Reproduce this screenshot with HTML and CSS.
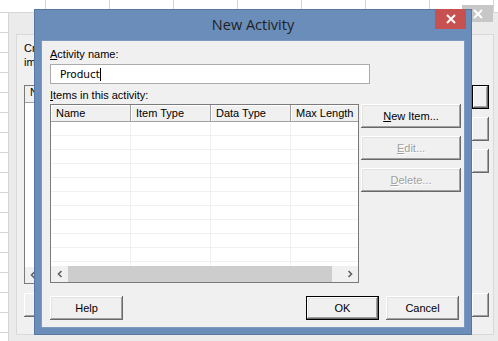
FILE: index.html
```html
<!DOCTYPE html>
<html lang="en">
<head>
    <meta charset="UTF-8">
    <meta name="viewport" content="width=device-width, initial-scale=1.0">
    <title>New Activity</title>
    <link rel="stylesheet" href="styles.css">
</head>
<body>
    <div class="desktop">
        <!-- window behind the dialog -->
        <div class="back-window">
            <div class="back-close">
                <svg width="10" height="10" viewBox="0 0 10 10"><path d="M1 1L9 9M9 1L1 9" stroke="#fff" stroke-width="2"/></svg>
            </div>
            <div class="back-client">
                <p class="back-text">Cr<br>im</p>
                <div class="back-main">
                    <div class="back-list">
                        <div class="back-head">N</div>
                        <div class="back-body"></div>
                        <div class="back-scroll">
                            <svg width="8" height="8" viewBox="0 0 8 8"><path d="M5.5 1L2.5 4L5.5 7" fill="none" stroke="#606060" stroke-width="1.6"/></svg>
                        </div>
                    </div>
                    <div class="back-buttons">
                        <div class="back-btn default"></div>
                        <div class="back-btn"></div>
                        <div class="back-btn"></div>
                    </div>
                </div>
                <div class="back-footer">
                    <div class="back-btn wide"></div>
                    <div class="back-btn"></div>
                </div>
            </div>
        </div>

        <!-- New Activity dialog -->
        <div class="dialog">
            <div class="titlebar">
                <span class="title">New Activity</span>
                <button class="close-button">
                    <svg width="10" height="10" viewBox="0 0 10 10"><path d="M1 1L9 9M9 1L1 9" stroke="#fff" stroke-width="2"/></svg>
                </button>
            </div>
            <div class="client">
                <label class="field-label" for="activityName"><u>A</u>ctivity name:</label>
                <div class="text-input" id="activityName">Product<span class="caret"></span></div>
                <div class="field-label items-label"><u>I</u>tems in this activity:</div>

                <div class="items-row">
                    <div class="list-view">
                        <div class="list-header">
                            <div class="col">Name</div>
                            <div class="col">Item Type</div>
                            <div class="col">Data Type</div>
                            <div class="col last">Max Length</div>
                        </div>
                        <div class="list-body"></div>
                        <div class="h-scroll">
                            <div class="arrow">
                                <svg width="8" height="8" viewBox="0 0 8 8"><path d="M5.5 1L2.5 4L5.5 7" fill="none" stroke="#606060" stroke-width="1.6"/></svg>
                            </div>
                            <div class="thumb"></div>
                            <div class="arrow right">
                                <svg width="8" height="8" viewBox="0 0 8 8"><path d="M2.5 1L5.5 4L2.5 7" fill="none" stroke="#606060" stroke-width="1.6"/></svg>
                            </div>
                        </div>
                    </div>
                    <div class="side-buttons">
                        <button class="win-button"><u>N</u>ew Item...</button>
                        <button class="win-button" disabled><u>E</u>dit...</button>
                        <button class="win-button" disabled><u>D</u>elete...</button>
                    </div>
                </div>

                <div class="footer">
                    <button class="win-button small">Help</button>
                    <button class="win-button small default push">OK</button>
                    <button class="win-button small">Cancel</button>
                </div>
            </div>
        </div>
    </div>
</body>
</html>
```

FILE: styles.css
```css
* {
    box-sizing: border-box;
}
body {
    margin: 0;
    font-family: "Liberation Sans", Arial, sans-serif;
    font-size: 11px;
    color: #000;
    background-color: #fff;
    /* spreadsheet grid behind the windows */
    background-image:
        repeating-linear-gradient(to bottom, transparent 0 12px, #d4d4d4 12px 13px, transparent 13px 20px),
        repeating-linear-gradient(to right, transparent 0 45px, #d4d4d4 45px 46px, transparent 46px 64px);
    background-size: 100% 20px, 64px 100%;
    background-position: 0 0, 0 0;
}
.desktop {
    position: relative;
    width: 498px;
    height: 341px;
    overflow: hidden;
}

/* ---------- back window ---------- */
.back-window {
    position: absolute;
    left: 8px;
    top: 12px;
    width: 492px;
    height: 335px;
    background-color: #ebebeb;
    border: 1px solid #d6d6d6;
    padding: 21px 4px 0 7px;
}
.back-close {
    position: absolute;
    right: 6px;
    top: -8px;
    width: 31px;
    height: 17px;
    background-color: #c7c7c7;
    display: flex;
    align-items: center;
    justify-content: center;
}
.back-client {
    height: 301px;
    width: 478px;
    background-color: #f0f0f0;
    border: 1px solid #d9d9d9;
    padding: 6px 4px 0 7px;
    display: flex;
    flex-direction: column;
}
.back-text {
    margin: 0;
    line-height: 14px;
    height: 44px;
}
.back-main {
    display: flex;
    gap: 4px;
}
.back-list {
    flex: 1;
    height: 199px;
    border: 1px solid #7a7a7a;
    background-color: #fff;
    display: flex;
    flex-direction: column;
}
.back-head {
    height: 17px;
    background-color: #f0f0f0;
    border-bottom: 1px solid #a0a0a0;
    padding-left: 5px;
}
.back-body {
    flex: 1;
}
.back-scroll {
    height: 16px;
    background-color: #f0f0f0;
    display: flex;
    align-items: center;
    padding-left: 4px;
}
.back-buttons {
    width: 17px;
    display: flex;
    flex-direction: column;
    gap: 8px;
}
.back-btn {
    width: 17px;
    height: 24px;
    background-color: #f0f0f0;
    box-shadow: inset -1px -1px #696969, inset 1px 1px #fff, inset -2px -2px #a0a0a0;
}
.back-btn.default {
    border: 1px solid #000;
}
.back-btn.wide {
    width: 73px;
}
.back-footer {
    display: flex;
    justify-content: space-between;
    margin-top: 9px;
}

/* ---------- dialog ---------- */
.dialog {
    position: absolute;
    left: 34px;
    top: 9px;
    width: 438px;
    height: 326px;
    background-color: #6b8dba;
    border: 1px solid #56779f;
    padding: 0 6px 6px 6px;
    display: flex;
    flex-direction: column;
}
.titlebar {
    height: 30px;
    display: flex;
    align-items: center;
    justify-content: center;
}
.title {
    font-family: "Open Sans", "Liberation Sans", sans-serif;
    font-size: 14.5px;
    color: #1f1f1f;
    margin-top: -1px;
}
.close-button {
    position: absolute;
    right: 5px;
    top: -1px;
    width: 31px;
    height: 20px;
    border: none;
    padding: 0;
    background-color: #c75050;
    display: flex;
    align-items: center;
    justify-content: center;
}
.client {
    flex: 1;
    background-color: #f0f0f0;
    border: 1px solid #7d99bf;
    padding: 7px 0 0 8px;
    display: flex;
    flex-direction: column;
    align-items: flex-start;
}
.field-label {
    display: block;
    line-height: 13px;
    height: 13px;
}
.text-input {
    margin-top: 3px;
    width: 320px;
    height: 20px;
    background-color: #fff;
    border: 1px solid #ababab;
    padding-left: 9px;
    line-height: 18px;
    font-family: "DejaVu Sans", sans-serif;
    font-size: 10.5px;
    display: flex;
    align-items: center;
}
.caret {
    display: inline-block;
    width: 1px;
    height: 13px;
    background-color: #000;
}
.items-label {
    margin-top: 5px;
}
.items-row {
    margin-top: 2px;
    display: flex;
    gap: 2px;
}
.list-view {
    width: 309px;
    height: 179px;
    border: 1px solid #7a7a7a;
    background-color: #fff;
    display: flex;
    flex-direction: column;
}
.list-header {
    display: flex;
    height: 17px;
    border-bottom: 1px solid #a0a0a0;
    background-color: #f0f0f0;
}
.col {
    width: 80px;
    padding-left: 5px;
    line-height: 16px;
    border-right: 1px solid #a0a0a0;
    box-shadow: inset 1px 1px #fff;
}
.col.last {
    flex: 1;
    border-right: none;
}
.list-body {
    flex: 1;
    background-image:
        repeating-linear-gradient(to bottom, transparent 0 13px, #f0f0f0 13px 14px),
        linear-gradient(to right, transparent 79px, #f0f0f0 79px 80px, transparent 80px 159px, #f0f0f0 159px 160px, transparent 160px 239px, #f0f0f0 239px 240px, transparent 240px);
}
.h-scroll {
    height: 16px;
    display: flex;
    background-color: #f0f0f0;
}
.h-scroll .arrow {
    width: 17px;
    display: flex;
    align-items: center;
    justify-content: center;
}
.h-scroll .arrow.right {
    margin-left: auto;
}
.thumb {
    width: 264px;
    background-color: #cdcdcd;
}
.side-buttons {
    display: flex;
    flex-direction: column;
    gap: 8px;
}
.win-button {
    width: 100px;
    height: 24px;
    padding: 0;
    border: none;
    background-color: #f0f0f0;
    box-shadow: inset -1px -1px #696969, inset 1px 1px #fff, inset -2px -2px #a0a0a0, inset 2px 2px #e3e3e3;
    font-family: "Liberation Sans", Arial, sans-serif;
    font-size: 11px;
    color: #000;
}
.win-button:disabled {
    color: #a0a0a0;
    text-shadow: 1px 1px #fff;
}
.win-button.small {
    width: 73px;
}
.win-button.default {
    border: 1px solid #000;
}
.footer {
    margin-top: 13px;
    width: 409px;
    display: flex;
    gap: 7px;
}
.push {
    margin-left: auto;
}
```
